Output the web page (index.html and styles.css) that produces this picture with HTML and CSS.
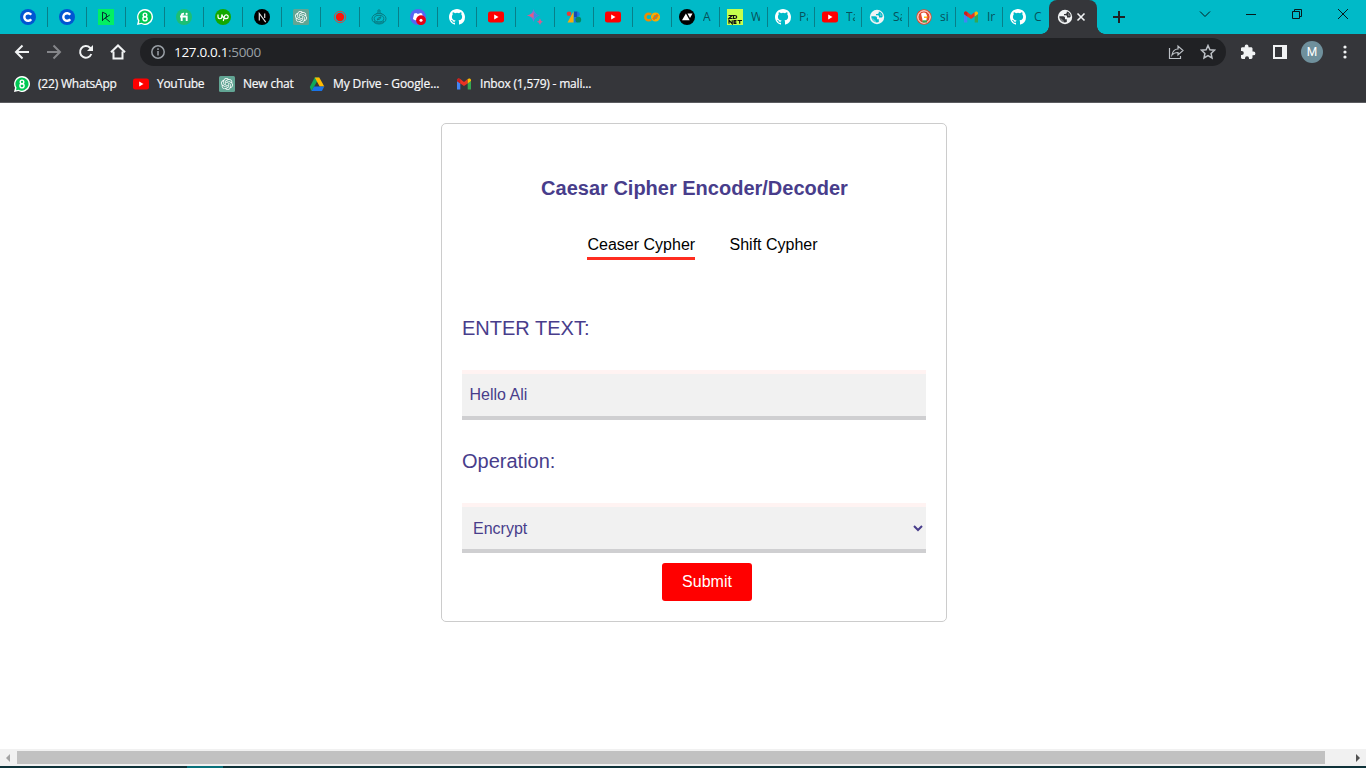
FILE: index.html
```html
<!DOCTYPE html>
<html lang="en">
<head>
<meta charset="utf-8">
<title>Caesar Cipher</title>
<link rel="stylesheet" href="styles.css">
</head>
<body>
<svg class="sprite" aria-hidden="true">
  <symbol id="c" viewBox="0 0 16 16"><circle cx="8" cy="8" r="8" fill="#0056d2"/><path d="M11.2 10.2A3.8 3.8 0 1 1 11.2 5.8" fill="none" stroke="#fff" stroke-width="2.4"/></symbol>
  <symbol id="dc" viewBox="0 0 16 16"><path fill="#03ef62" d="M0 0h16v16H0z"/><path d="M4.5 12V3.2L8.4 5v3.2L4.5 11M7.2 9l4.600-3M7.200 9l4.600 3.800" fill="none" stroke="#05192d" stroke-width=".9"/></symbol>
  <symbol id="wa" viewBox="0 0 16 16"><path d="M8 0a8 8 0 1 1-3.7 15.1L0 16l1-4.2A8 8 0 0 1 8 0z" fill="#fff"/><path d="M8 1.4a6.6 6.6 0 1 1-3.4 12.3L2 14.2l.5-2.6A6.6 6.6 0 0 1 8 1.4z" fill="#00c853"/><circle cx="8" cy="5.9" r="1.8" fill="none" stroke="#fff" stroke-width="1.4"/><circle cx="8" cy="9.8" r="2.1" fill="none" stroke="#fff" stroke-width="1.4"/></symbol>
  <symbol id="fi" viewBox="0 0 16 16"><circle cx="8" cy="8" r="8" fill="#1dbf73"/><path d="M5.700 12V6.300q0-1.700 2.300-1.500M4 7.500h6.700V12" fill="none" stroke="#fff" stroke-width="1.900"/><circle cx="10.600" cy="4.900" r="1.100" fill="#fff"/></symbol>
  <symbol id="up" viewBox="0 0 16 16"><circle cx="8" cy="8" r="8" fill="#14a800"/><path d="M3 5.500v2.300a1.900 1.900 0 0 0 3.800 0V5.500q.8 2.800 2.400 3.700M8.300 12l1.200-4.800a1.900 1.900 0 1 1 1.800 2.400q-1.100 0-2.100-.5" fill="none" stroke="#fff" stroke-width="1.200"/></symbol>
  <symbol id="next" viewBox="0 0 16 16"><circle cx="8" cy="8" r="8"/><path d="M5.3 11.5v-7l6.400 8.600M10.700 4.500V9" fill="none" stroke="#ddd" stroke-width="1.200"/></symbol>
  <symbol id="gpt" viewBox="0 0 16 16"><rect width="16" height="16" rx="1.500" fill="#62a594"/><path transform="translate(2 2) scale(.5)" fill="#fff" d="M22.280 9.820a5.980 5.980 0 0 0-.52-4.910 6.050 6.050 0 0 0-6.510-2.900A6.070 6.070 0 0 0 4.980 4.180a5.980 5.980 0 0 0-4 2.900 6.050 6.050 0 0 0 .74 7.100 5.980 5.980 0 0 0 .51 4.910 6.050 6.050 0 0 0 6.510 2.900A5.980 5.980 0 0 0 13.260 24a6.060 6.060 0 0 0 5.770-4.210 5.990 5.990 0 0 0 4-2.900 6.060 6.060 0 0 0-.75-7.070zM13.260 22.430a4.480 4.480 0 0 1-2.880-1.040l.14-.08 4.780-2.760a.8.8 0 0 0 .39-.68v-6.740l2.020 1.170.04.05v5.580a4.500 4.500 0 0 1-4.490 4.500zM3.600 18.300a4.470 4.470 0 0 1-.54-3.010l.14.08 4.790 2.760a.77.77 0 0 0 .78 0l5.840-3.370v2.330l-.03.06L9.740 19.950a4.500 4.500 0 0 1-6.140-1.650zM2.340 7.900a4.490 4.490 0 0 1 2.370-1.970V11.600a.77.77 0 0 0 .39.680l5.810 3.350-2.020 1.170h-.07l-4.830-2.790A4.500 4.500 0 0 1 2.340 7.870zm16.600 3.860-5.830-3.390 2.010-1.160h.07l4.830 2.790a4.490 4.490 0 0 1-.68 8.100v-5.680a.79.79 0 0 0-.4-.660zm2.010-3.020-.14-.09-4.770-2.780a.78.78 0 0 0-.79 0L9.410 9.230V6.900l.03-.06 4.830-2.790a4.500 4.500 0 0 1 6.680 4.660zM8.310 12.860l-2.020-1.160-.04-.06V6.070a4.500 4.500 0 0 1 7.380-3.450l-.14.08-4.780 2.760a.8.8 0 0 0-.39.680zm1.090-2.360L12 9l2.610 1.500v3L12 15l-2.610-1.500z"/></symbol>
  <symbol id="rec" viewBox="0 0 16 16"><circle cx="8" cy="8" r="5.700" fill="none" stroke="#c94e49" stroke-width="1"/><circle cx="8" cy="8" r="4.200" fill="#ff1408"/></symbol>
  <symbol id="compass" viewBox="0 0 16 16"><g fill="none" stroke="#087b83" stroke-width="1"><circle cx="8" cy="2" r="1.200"/><path d="M7 3.500 4.600 5.400M9 3.500l2.400 1.900"/><ellipse cx="8" cy="9.700" rx="7" ry="5.300"/><ellipse cx="8" cy="9.600" rx="4.800" ry="3.300"/><path d="M3 12.400q5 3.500 10 0M6.200 11l1-2 2.800-1.200-1 2.100z"/></g></symbol>
  <symbol id="discord" viewBox="0 0 16 16"><circle cx="8" cy="8" r="8" fill="#5865f2"/><path d="M4.200 4.500 6.500 4l.6.800h2L10 4l2.100.6 1.200 5-2 1.700H5L2.900 10z" fill="#fff"/><circle cx="11" cy="11.200" r="4.900" fill="#e50012"/><circle cx="11" cy="11.200" r="1.500" fill="#fff"/></symbol>
  <symbol id="gh" viewBox="0 0 16 16"><path fill="#fff" d="M8 0C3.58 0 0 3.58 0 8c0 3.54 2.29 6.53 5.47 7.59.4.07.55-.17.55-.38 0-.19-.01-.82-.01-1.49-2.01.37-2.53-.49-2.69-.94-.09-.23-.48-.94-.82-1.13-.28-.15-.68-.52-.01-.53.63-.01 1.08.58 1.23.82.72 1.21 1.87.87 2.33.66.07-.52.28-.87.51-1.07-1.78-.2-3.64-.89-3.64-3.95 0-.87.31-1.59.82-2.15-.08-.2-.36-1.02.08-2.12 0 0 .67-.21 2.2.82a7.6 7.6 0 0 1 4 0c1.53-1.04 2.2-.82 2.2-.82.44 1.1.16 1.92.08 2.12.51.56.82 1.27.82 2.15 0 3.07-1.87 3.75-3.65 3.95.29.25.54.73.54 1.48 0 1.07-.01 1.93-.01 2.2 0 .21.15.46.55.38A8.01 8.01 0 0 0 16 8c0-4.42-3.58-8-8-8z"/></symbol>
  <symbol id="yt" viewBox="0 0 16 16"><rect y="2.400" width="16" height="11.200" rx="2.400" fill="red"/><path d="m6.200 5.500 4.300 2.500-4.300 2.500z" fill="#fff"/></symbol>
  <symbol id="bard" viewBox="0 0 16 16"><path fill="#6f79d8" d="M6.500 0q1.200 5.300 6.300 6.500Q7.700 7.700 6.500 13 5.300 7.700 0 6.500 5.300 5.300 6.500 0z"/><path fill="#e45b83" d="M0 6.500Q5.300 5.300 6.500 3v6Q4.500 7.300 0 6.500z"/><path fill="#348fe5" d="M7 4q2 2 5.800 2.500Q8.500 7.500 7 9.500z"/><path fill="#d85b91" d="M13 9.500q.6 2.700 3.200 3.200-2.600.6-3.200 3.200-.6-2.600-3.200-3.200 2.600-.5 3.200-3.200z"/></symbol>
  <symbol id="ads" viewBox="0 0 16 16"><circle cx="3" cy="4.700" r="2.300" fill="#ea3b35"/><path d="M7.500 2.500v11h-6z" fill="#fbab0c"/><path d="M8 2.500h3.500V8H8z" fill="#164bb3"/><path d="M8 8h3.500v5.500H8z" fill="#1a75e8"/><path d="M11.500 2.500a2.800 2.800 0 0 1 0 5.500z" fill="#1a75e8"/><circle cx="12.300" cy="10.700" r="2.900" fill="#078760"/></symbol>
  <symbol id="colab" viewBox="0 0 16 16"><g fill="none" stroke-width="2.500"><circle cx="11.500" cy="8" r="3.300" stroke="#f9ab00"/><path d="M7 5.700a3.300 3.300 0 1 0 0 4.600" stroke="#f08b00"/><path d="m9.200 10.300 4.600-4.600" stroke="#e8710a"/></g></symbol>
  <symbol id="tri" viewBox="0 0 16 16"><circle cx="8" cy="8" r="8"/><path d="M3 11.300 6.900 4.500l3.800 6.800zM8.500 4.500h5L11 9z" fill="#fff"/></symbol>
  <symbol id="zd" viewBox="0 0 16 16"><path d="M0 0h16v16H0z" fill="#c6ff4d"/><path d="M1.500 6.500H5L2 9.500h3.500M6.500 6.500v3h1.200q2 0 2-1.500t-2-1.500zM2 14.800v-3.600l3.200 3.600v-3.600M9.500 11.500H7v2.800h2.500M7 12.900h2.300M10.500 11.500h4.500M12.700 11.500v3.300" fill="none" stroke="#111" stroke-width="1.200"/></symbol>
  <symbol id="globe" viewBox="0 0 16 16"><circle cx="8" cy="8" r="7.200" fill="#f1f3f4"/><g fill="var(--globe, #00bac8)"><path d="M2.300 7.300h3.900c1.200 0 1.800.8 1.800 1.700v1.200h1.800v2.900c-3.700 1.200-7.500-1.300-7.500-5.800z"/><path d="M9.800 2.600v.9c0 .9-.7 1.400-1.500 1.400H7v1.400h1.600c1 0 1.400.6 1.400 1.300v.9h2c.9 0 1.500-.5 1.700-1.300.1-2.200-1.400-4.200-3.900-4.600z"/></g><path d="M3.500 8.700 7 12v1.500c-2.300-.2-4.400-2.500-3.500-4.800zM11 3.500l2 3.300-2 .2z" fill="#f1f3f4" opacity=".35"/></symbol>
  <symbol id="duck" viewBox="0 0 16 16"><circle cx="8" cy="8" r="7.700" fill="#e34a2e"/><circle cx="8" cy="8" r="6.200" fill="none" stroke="#fff" stroke-width="1"/><path d="M5 4.500q5-2.500 6 2l-.8 6.500H7z" fill="#fff"/><path d="M8 7.500h4l-1 1.600H8z" fill="#fdbc13"/><path d="M6.500 11.300H11v2.200H6.500z" fill="#36a852"/></symbol>
  <symbol id="gm" viewBox="0 0 16 16"><path d="M1 5v8.500h3.300V7.200z" fill="#4285f4"/><path d="M15 5v8.500h-3.300V7.200z" fill="#34a853"/><path d="M1 4.300C1 2.600 2.900 2 4.300 3.100L8 5.900l3.700-2.800v4.300L8 10.100 4.300 7.400 1 5z" fill="#ea3323"/><path d="M11.700 3.100C13.100 2 15 2.600 15 4.300V5l-3.300 2.400z" fill="#fbbc04"/><path d="M1 4.300C1 2.600 2.900 2 4.300 3.100v4.300L1 5z" fill="#c5221f"/></symbol>
  <symbol id="drive" viewBox="0 0 16 16"><path d="M5.700 1.500h4.600L4 12.400 2.400 15 .8 11.100z" fill="#0fa958"/><path d="M5.700 1.500h4.600l5 9h-4.600z" fill="#ffba00"/><path d="M5 10.500h10.300L12.900 15H2.500z" fill="#1a73e8"/></symbol>
</svg>

<header class="browser">
  <div class="tabstrip">
    <div class="tab"><svg><use href="#c"/></svg></div>
    <div class="tab"><svg><use href="#c"/></svg></div>
    <div class="tab"><svg><use href="#dc"/></svg></div>
    <div class="tab"><svg><use href="#wa"/></svg></div>
    <div class="tab"><svg><use href="#fi"/></svg></div>
    <div class="tab"><svg><use href="#up"/></svg></div>
    <div class="tab"><svg><use href="#next"/></svg></div>
    <div class="tab"><svg><use href="#gpt"/></svg></div>
    <div class="tab"><svg><use href="#rec"/></svg></div>
    <div class="tab"><svg><use href="#compass"/></svg></div>
    <div class="tab"><svg><use href="#discord"/></svg></div>
    <div class="tab"><svg><use href="#gh"/></svg></div>
    <div class="tab"><svg><use href="#yt"/></svg></div>
    <div class="tab"><svg><use href="#bard"/></svg></div>
    <div class="tab"><svg><use href="#ads"/></svg></div>
    <div class="tab"><svg><use href="#yt"/></svg></div>
    <div class="tab"><svg><use href="#colab"/></svg></div>
    <div class="tab wide"><svg><use href="#tri"/></svg><span>A</span></div>
    <div class="tab wide"><svg><use href="#zd"/></svg><span>W</span></div>
    <div class="tab mid"><svg><use href="#gh"/></svg><span>Pa</span></div>
    <div class="tab mid"><svg><use href="#yt"/></svg><span>Ta</span></div>
    <div class="tab mid"><svg><use href="#globe"/></svg><span>Sa</span></div>
    <div class="tab mid"><svg><use href="#duck"/></svg><span>si</span></div>
    <div class="tab mid"><svg><use href="#gm"/></svg><span>Ir</span></div>
    <div class="tab last"><svg><use href="#gh"/></svg><span>C</span></div>
    <div class="tab active"><svg><use href="#globe"/></svg><svg class="close" viewBox="0 0 8 8"><path d="m.5.500 7 7m0-7-7 7"/></svg></div>
    <svg class="new-tab" viewBox="0 0 12 12"><path d="M6 0v12M0 6h12"/></svg>
    <div class="window-controls">
      <svg viewBox="0 0 12 12"><path d="m1 3.500 5 5 5-5"/></svg>
      <svg viewBox="0 0 12 12"><path d="M1 6.500h10"/></svg>
      <svg viewBox="0 0 12 12"><path d="M1.500 3.500h7v7h-7zM3.500 3.500v-2h7v7h-2"/></svg>
      <svg viewBox="0 0 12 12"><path d="m1 1 10 10m0-10L1 11"/></svg>
    </div>
  </div>

  <div class="toolbar">
    <svg class="nav" viewBox="0 0 16 16"><path d="M15 8H2m6.500-6.500L2 8l6.500 6.500"/></svg>
    <svg class="nav off" viewBox="0 0 16 16"><path d="M1 8h13M7.500 1.500 14 8l-6.500 6.500"/></svg>
    <svg class="nav" viewBox="0 0 16 16"><path d="M13.300 10A5.800 5.800 0 1 1 12 3.800l1.500 1.500"/><path class="solid" d="M15 1v6H9z"/></svg>
    <svg class="nav" viewBox="0 0 16 16"><path d="M1 8.300 8 1.500l7 6.800M3.500 7.500v7h9v-7"/></svg>
    <div class="omnibox">
      <svg class="info" viewBox="0 0 16 16"><circle cx="8" cy="8" r="6.200"/><path d="M8 7v4.500M8 4.200v1.700"/></svg>
      <div class="url"><b>127.0.0.1</b>:5000</div>
      <svg class="share" viewBox="0 0 16 16"><path d="M1.500 4v10.500h11V12M4 11q1-6 6-6V2l5 4.500-5 4.500V8.500Q6 8.500 4 11z"/></svg>
      <svg class="star" viewBox="0 0 16 16"><path d="m8 1.500 1.900 4.200 4.600.5-3.400 3.200.9 4.600-4-2.300L4 14l.9-4.600L1.500 6.200l4.600-.5z"/></svg>
    </div>
    <svg class="puzzle" viewBox="0 0 16 16"><path d="M13.500 7.500h-1V4.600c0-.8-.6-1.400-1.400-1.400H8.500V2.500a1.900 1.900 0 0 0-3.800 0v.7H2.400C1.600 3.200 1 3.800 1 4.600v2.500h.8a2 2 0 0 1 0 4H1v2.500c0 .8.600 1.400 1.400 1.400H5v-.8a2 2 0 0 1 4 0v.8h2.100c.8 0 1.400-.6 1.400-1.400v-2.300h1a1.900 1.900 0 0 0 0-3.800z"/></svg>
    <svg class="panel" viewBox="0 0 14 14"><path fill-rule="evenodd" d="M0 0h14v14H0zM2 2v10h7V2z"/></svg>
    <div class="avatar">M</div>
    <svg class="menu" viewBox="0 0 4 14"><circle cx="2" cy="2" r="1.600"/><circle cx="2" cy="7" r="1.600"/><circle cx="2" cy="12" r="1.600"/></svg>
  </div>

  <nav class="bookmarks">
    <a class="bm-wa"><svg><use href="#wa"/></svg><span>(22) WhatsApp</span></a>
    <a class="bm-yt"><svg><use href="#yt"/></svg><span>YouTube</span></a>
    <a class="bm-chat"><svg><use href="#gpt"/></svg><span>New chat</span></a>
    <a class="bm-drive"><svg><use href="#drive"/></svg><span>My Drive - Google...</span></a>
    <a class="bm-mail"><svg><use href="#gm"/></svg><span>Inbox (1,579) - mali...</span></a>
  </nav>
</header>

<main class="page">
  <form class="card">
    <h1>Caesar Cipher Encoder/Decoder</h1>
    <div class="modes"><a class="selected">Ceaser Cypher</a><a>Shift Cypher</a></div>
    <label for="text">ENTER TEXT:</label>
    <input id="text" class="field" type="text" value="Hello Ali">
    <label for="operation">Operation:</label>
    <select id="operation" class="field"><option>Encrypt</option><option>Decrypt</option></select>
    <button type="button">Submit</button>
  </form>
</main>

<div class="scrollbar">
  <svg class="arrow dim" viewBox="0 0 4 8"><path d="M4 0v8L0 4z"/></svg>
  <div class="thumb"></div>
  <svg class="arrow" viewBox="0 0 4 8"><path d="M0 0v8l4-4z"/></svg>
</div>
<div class="taskbar"><i></i></div>
</body>
</html>
```
FILE: styles.css
```css
* { box-sizing: border-box; }
body {
  margin: 0;
  height: 768px;
  display: flex;
  flex-direction: column;
  overflow: hidden;
  background: #fff;
  font-family: "Liberation Sans", Arial, sans-serif;
}
svg { display: block; flex: none; }
.sprite { position: absolute; width: 0; height: 0; }

.browser {
  height: 103px;
  background: #35363a;
  border-bottom: 1px solid #5b5c60;
  font-family: "Open Sans", "Noto Sans", sans-serif;
  font-size: 12px;
}
.tabstrip { display: flex; height: 34px; padding-left: 9px; background: #00bac8; }
.tab {
  flex: none;
  display: flex;
  align-items: center;
  width: 39px;
  padding-left: 11px;
  background: linear-gradient(#087f89, #087f89) right 7px / 1px 20px no-repeat;
}
.tab svg { width: 16px; height: 16px; }
.tab.wide { width: 48px; padding-left: 7px; }
.tab.mid { width: 47px; padding-left: 7px; }
.tab.last { width: 46px; padding-left: 7px; background: none; }
.tab span {
  width: 9px;
  margin-left: 8px;
  overflow: hidden;
  white-space: nowrap;
  line-height: 16px;
  color: #07515a;
}
.tab.active {
  --globe: #35363a;
  position: relative;
  width: 48px;
  padding-left: 8px;
  background: #35363a;
  border-radius: 8px 8px 0 0;
}
.tab.active::before,
.tab.active::after {
  content: "";
  position: absolute;
  bottom: 0;
  width: 8px;
  height: 8px;
}
.tab.active::before { right: 100%; background: radial-gradient(circle at 0 0, transparent 7.5px, #35363a 8px); }
.tab.active::after { left: 100%; background: radial-gradient(circle at 100% 0, transparent 7.5px, #35363a 8px); }
.tab.active .close { width: 8px; height: 8px; margin-left: 4px; overflow: visible; fill: none; stroke: #f1f3f4; stroke-width: 1.6; }
.new-tab { width: 12px; height: 12px; margin: 11px 0 0 16px; stroke: #202124; stroke-width: 2; }
.window-controls { display: flex; gap: 34px; margin: 8px 17px 0 auto; }
.window-controls svg { width: 12px; height: 12px; fill: none; stroke: #07191b; stroke-width: 1; }

.toolbar { display: flex; align-items: center; height: 36px; padding-left: 14px; }
.nav { width: 16px; height: 16px; margin-right: 16px; fill: none; stroke: #f1f3f4; stroke-width: 2; }
.nav.off { stroke: #85868a; }
.nav .solid { fill: #f1f3f4; stroke: none; }
.omnibox {
  display: flex;
  align-items: center;
  width: 1086px;
  height: 28px;
  margin-left: -2px;
  padding: 0 10px;
  border-radius: 14px;
  background: #202124;
  color: #9aa0a6;
}
.info { width: 16px; height: 16px; fill: none; stroke: #9aa0a6; stroke-width: 1.5; }
.url { margin: 0 auto 0 8px; font-size: 13.5px; letter-spacing: -.32px; }
.url b { color: #fff; font-weight: 400; }
.share, .star { width: 16px; height: 16px; fill: none; stroke: #bdc1c6; stroke-width: 1.2; }
.star { margin-left: 16px; stroke-width: 1.5; }
.puzzle { width: 16px; height: 16px; margin-left: 14px; fill: #f1f3f4; }
.panel { width: 14px; height: 14px; margin-left: 17px; fill: #f1f3f4; }
.avatar {
  width: 22px;
  height: 22px;
  margin-left: 14px;
  border-radius: 50%;
  background: #6f909c;
  color: #fff;
  font: 12px/22px Roboto, sans-serif;
  text-align: center;
}
.menu { width: 4px; height: 14px; margin-left: 20px; fill: #f1f3f4; }

.bookmarks { display: flex; height: 28px; padding-left: 14px; color: #f8f9fa; letter-spacing: -.2px; }
.bookmarks a { display: flex; align-items: center; gap: 8px; white-space: nowrap; }
.bookmarks svg { width: 16px; height: 16px; }
.bookmarks span { padding-bottom: 1px; -webkit-text-stroke: .2px currentColor; }
.bm-wa { width: 119px; }
.bm-yt { width: 86px; letter-spacing: -.3px; }
.bm-chat { width: 90px; }
.bm-drive { width: 147px; letter-spacing: -.1px; }

.page { flex: 1; padding: 20px 0 0 441px; }
.card {
  display: flex;
  flex-direction: column;
  width: 506px;
  height: 499px;
  padding: 0 20px;
  border: 1px solid #ccc;
  border-radius: 5px;
  color: #483d8b;
}
h1 { margin: 52px 0 0; padding-left: 1px; font-size: 20px; line-height: 24px; text-align: center; white-space: nowrap; }
.modes { display: flex; gap: 34px; margin: 35px 0 0 125px; color: #000; font-size: 16px; line-height: 20px; }
.modes a { height: 25px; text-indent: .5px; }
.modes .selected { width: 108px; border-bottom: 3px solid #ff2d20; white-space: nowrap; }
label { margin-top: 56px; font-size: 20px; line-height: 24px; }
.field {
  width: 464px;
  height: 50px;
  margin: 30px 0 0;
  padding: 0 7.5px;
  border: 0 solid;
  border-width: 4px 0;
  border-color: #fff3f2 transparent #cfcfd1;
  border-radius: 0;
  background: #f1f1f1;
  color: #483d8b;
  font: 16px "Liberation Sans", Arial, sans-serif;
}
select.field { padding: 0 7px; }
.field + label { margin-top: 29px; }
button {
  width: 90px;
  height: 38px;
  margin: 10px 0 0 200px;
  padding: 0;
  border: 0;
  border-radius: 3px;
  background: red;
  color: #fff;
  font: 16px "Liberation Sans", Arial, sans-serif;
}

.scrollbar {
  display: flex;
  align-items: center;
  justify-content: space-between;
  height: 17px;
  padding: 0 6px;
  background: #f1f1f1;
}
.arrow { width: 4px; height: 8px; fill: #505050; }
.arrow.dim { fill: #a3a3a3; }
.thumb { width: 1308px; height: 13px; margin: 0 auto 0 7px; background: #c1c1c1; }
.taskbar { height: 2px; padding-left: 187px; background: #0e3239; }
.taskbar i { display: block; width: 36px; height: 2px; background: #08707a; }
```
